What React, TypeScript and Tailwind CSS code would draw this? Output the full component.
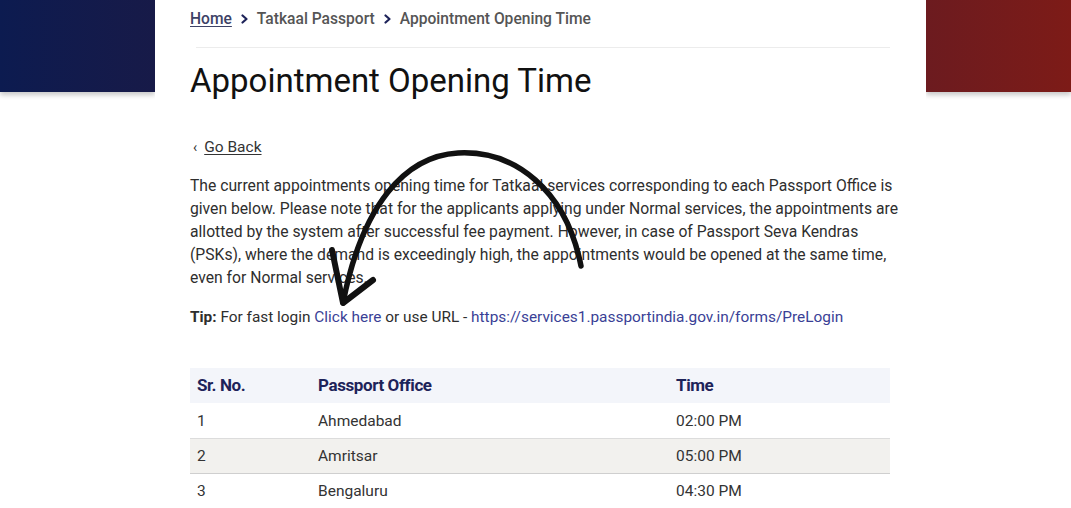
const rows = [
  { sr: '1', office: 'Ahmedabad', time: '02:00 PM' },
  { sr: '2', office: 'Amritsar', time: '05:00 PM' },
  { sr: '3', office: 'Bengaluru', time: '04:30 PM' },
]

function Chevron() {
  return (
    <svg width="9" height="10" viewBox="0 0 9 10" className="mx-[8px] shrink-0">
      <path d="M2.5 1.5 L6.5 5 L2.5 8.5" fill="none" stroke="#1d2359" strokeWidth="2.2" strokeLinecap="round" strokeLinejoin="round" />
    </svg>
  )
}

function HandArrow() {
  return (
    <svg className="pointer-events-none absolute left-0 top-0 z-20" width="1071" height="508" viewBox="0 0 1071 508">
      <path
        d="M581 266 C 566 190, 515 150, 458 153 C 405 156, 362 205, 343 303"
        fill="none"
        stroke="#111"
        strokeWidth="5.5"
        strokeLinecap="round"
      />
      <path d="M332 250 L343 303 L373 280" fill="none" stroke="#111" strokeWidth="6" strokeLinecap="round" strokeLinejoin="round" />
    </svg>
  )
}

export default function App() {
  return (
    <div className="relative h-[508px] w-[1071px] overflow-hidden bg-white font-['Roboto',sans-serif]">
      <div className="grid grid-cols-[155px_771px_1fr]">
        <div className="h-[92px] bg-gradient-to-r from-[#0c1b50] to-[#171a48] shadow-[0_3px_5px_rgba(0,0,0,0.22)]" />

        <main className="relative z-10 h-[508px] bg-white pl-[35px] pr-[36px]">
          <nav className="flex items-center pt-[9px] text-[15.6px] font-medium leading-[20px] text-[#555]">
            <a className="text-[#3d4266] underline underline-offset-2">Home</a>
            <Chevron />
            <span>Tatkaal Passport</span>
            <Chevron />
            <span>Appointment Opening Time</span>
          </nav>
          <div className="ml-[6px] mt-[18px] h-px bg-[#ececec]" />

          <h1 className="mt-[13px] text-[33px] leading-[40px] text-[#111]">Appointment Opening Time</h1>

          <a className="mt-[35px] flex items-center text-[15.5px] leading-[22px] text-[#333]">
            <span className="ml-[3px] mr-[7px] text-[14px]">‹</span>
            <span className="underline underline-offset-2">Go Back</span>
          </a>

          <p className="-mr-[8px] mt-[16px] text-[15.7px] leading-[23px] text-[#2e2e2e]">
            The current appointments opening time for Tatkaal services corresponding to each Passport Office is given
            below. Please note that for the applicants applying under Normal services, the appointments are allotted by
            the system after successful fee payment. However, in case of Passport Seva Kendras (PSKs), where the demand
            is exceedingly high, the appointments would be opened at the same time, even for Normal services.
          </p>

          <p className="mt-[17px] text-[15.4px] leading-[23px] text-[#2e2e2e]">
            <span className="font-bold">Tip:</span> For fast login <a className="text-[#3a3f96]">Click here</a> or use URL
            - <a className="text-[#3a3f96]">https://services1.passportindia.gov.in/forms/PreLogin</a>
          </p>

          <table className="mt-[39px] w-full border-collapse text-left">
            <thead>
              <tr className="h-[35px] bg-[#f3f5fa]">
                <th className="w-[128px] pl-[7px] text-[17px] font-bold tracking-[-0.4px] text-[#1d2359]">Sr. No.</th>
                <th className="w-[358px] text-[17px] font-bold tracking-[-0.4px] text-[#1d2359]">Passport Office</th>
                <th className="text-[17px] font-bold tracking-[-0.4px] text-[#1d2359]">Time</th>
              </tr>
            </thead>
            <tbody>
              {rows.map((row, i) => (
                <tr
                  key={row.sr}
                  className={
                    i % 2 === 1
                      ? 'h-[35px] border-y border-[#cfcfcf] bg-[#f2f1ee]'
                      : 'h-[35px] border-b border-[#dcdcdc] bg-white'
                  }
                >
                  <td className="pl-[7px] pt-[2px] text-[15.5px] text-[#333]">{row.sr}</td>
                  <td className="pt-[2px] text-[15.5px] text-[#333]">{row.office}</td>
                  <td className="pt-[2px] text-[15.5px] text-[#333]">{row.time}</td>
                </tr>
              ))}
            </tbody>
          </table>
        </main>

        <div className="h-[92px] bg-gradient-to-r from-[#6c1b1f] to-[#7d1b17] shadow-[0_3px_5px_rgba(0,0,0,0.22)]" />
      </div>

      <HandArrow />
    </div>
  )
}
